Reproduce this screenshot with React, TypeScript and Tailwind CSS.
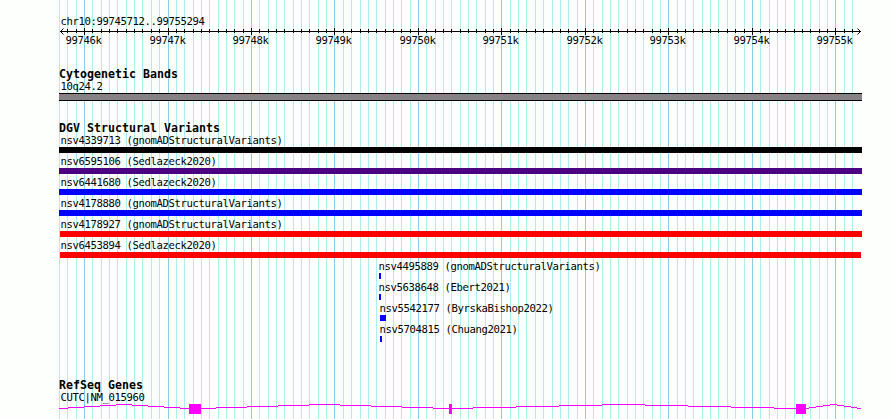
import React from 'react';

interface Variant {
  label: string;
  labelX: number;
  start: number;
  end: number;
  color: string;
}

const REGION_START = 99745712;
const REGION_END = 99755294;
const PX_PER_BP = 800 / (REGION_END - REGION_START + 1);

const toX = (bp: number) => Math.round(60 + (bp - REGION_START) * PX_PER_BP);

const TICKS = Array.from({ length: 96 }, (_, i) => {
  const bp = 99745700 + i * 100;
  return { bp, x: toX(bp), major: bp % 1000 === 0 };
});

const VARIANTS: Variant[] = [
  { label: 'nsv4339713 (gnomADStructuralVariants)', labelX: 60.5, start: 59, end: 862, color: 'bg-black' },
  { label: 'nsv6595106 (Sedlazeck2020)', labelX: 60.5, start: 59, end: 862, color: 'bg-[#4b0082]' },
  { label: 'nsv6441680 (Sedlazeck2020)', labelX: 60.5, start: 59, end: 862, color: 'bg-[#0000ff]' },
  { label: 'nsv4178880 (gnomADStructuralVariants)', labelX: 60.5, start: 59, end: 862, color: 'bg-[#0000ff]' },
  { label: 'nsv4178927 (gnomADStructuralVariants)', labelX: 60.5, start: 60, end: 862, color: 'bg-[#ff0000]' },
  { label: 'nsv6453894 (Sedlazeck2020)', labelX: 60.5, start: 60, end: 861, color: 'bg-[#ff0000]' },
  { label: 'nsv4495889 (gnomADStructuralVariants)', labelX: 378.5, start: 379, end: 381, color: 'bg-[#0000ff]' },
  { label: 'nsv5638648 (Ebert2021)', labelX: 378.5, start: 379, end: 381, color: 'bg-[#0000ff]' },
  { label: 'nsv5542177 (ByrskaBishop2022)', labelX: 379.5, start: 380, end: 386, color: 'bg-[#0000ff]' },
  { label: 'nsv5704815 (Chuang2021)', labelX: 379.5, start: 380, end: 382, color: 'bg-[#0000ff]' },
];

const EXONS = [
  { x: 189, width: 12 },
  { x: 449, width: 3 },
  { x: 796, width: 10 },
];

// x breakpoints of each intron hat, one pixel up per step and back down
const INTRONS = [
  [59, 68, 84, 100, 116, 132, 148, 164, 180, 189],
  [201, 216, 247, 278, 309, 340, 371, 402, 433, 449],
  [452, 473, 516, 559, 602, 645, 688, 731, 774, 796],
  [806, 809, 816, 823, 830, 837, 844, 851, 857, 861],
];

const GridLines: React.FC = () => (
  <svg className="absolute inset-0" width="890" height="419" shapeRendering="crispEdges">
    {TICKS.map(t => (
      <rect key={t.bp} x={t.x} y="0" width="1" height="419" fill={t.major ? '#87ceeb' : '#afeeee'} />
    ))}
  </svg>
);

const Ruler: React.FC = () => (
  <svg className="block" width="890" height="19">
    <g shapeRendering="crispEdges">
      <rect x="60" y="3" width="801" height="1" />
      {TICKS.slice(1).map(t => (
        <rect key={t.bp} x={t.x} y={t.major ? 0 : 1} width="1" height={t.major ? 7 : 4} />
      ))}
    </g>
    <path d="M63.5 0.5L60.5 3.5L63.5 6.5M857.5 0.5L860.5 3.5L857.5 6.5" fill="none" stroke="black" />
    {TICKS.filter(t => t.major).map(t => (
      <text key={t.bp} x={t.x - 18.5} y="16">{t.bp / 1000}k</text>
    ))}
  </svg>
);

const TrackTitle: React.FC<{ children: React.ReactNode }> = ({ children }) => (
  <h2 className="h-3 pl-[59px] text-[11.6px] leading-[13px] font-bold tracking-[0.016px]">{children}</h2>
);

const App: React.FC = () => {
  return (
    <div className="relative w-[890px] h-[419px] overflow-hidden bg-[#fdfffc] text-black whitespace-pre font-['DejaVu_Sans_Mono',monospace] text-[10.6px] leading-[13px] tracking-[-0.381px]">
      <GridLines />

      <div className="relative flex flex-col pt-[15px]">
        <div className="pl-[60.5px]">chr10:99745712..99755294</div>
        <Ruler />

        <section className="pt-[21px]">
          <TrackTitle>Cytogenetic Bands</TrackTitle>
          <div className="pl-[60.5px]">10q24.2</div>
          <div className="ml-[59px] w-[803px] h-2 border-y border-black bg-[#868285]" />
        </section>

        <section className="pt-[21px]">
          <TrackTitle>DGV Structural Variants</TrackTitle>
          {VARIANTS.map(v => (
            <div key={v.label} className="h-[21px]">
              <div style={{ paddingLeft: v.labelX }}>{v.label}</div>
              <div className={`h-1.5 ${v.color}`} style={{ marginLeft: v.start, width: v.end - v.start }} />
            </div>
          ))}
        </section>

        <section className="pt-[35px]">
          <TrackTitle>RefSeq Genes</TrackTitle>
          <div className="pl-[60.5px]">CUTC|NM_015960</div>
          <svg className="block" width="890" height="15" fill="#ff00ff" shapeRendering="crispEdges">
            {INTRONS.map(steps =>
              steps.slice(1).map((x, i) => (
                <rect key={x} x={steps[i]} y={Math.abs(4 - i)} width={x - steps[i]} height="1" />
              ))
            )}
            {EXONS.map(e => (
              <rect key={e.x} x={e.x} y="0" width={e.width} height="10" />
            ))}
          </svg>
        </section>
      </div>
    </div>
  );
};

export default App;
